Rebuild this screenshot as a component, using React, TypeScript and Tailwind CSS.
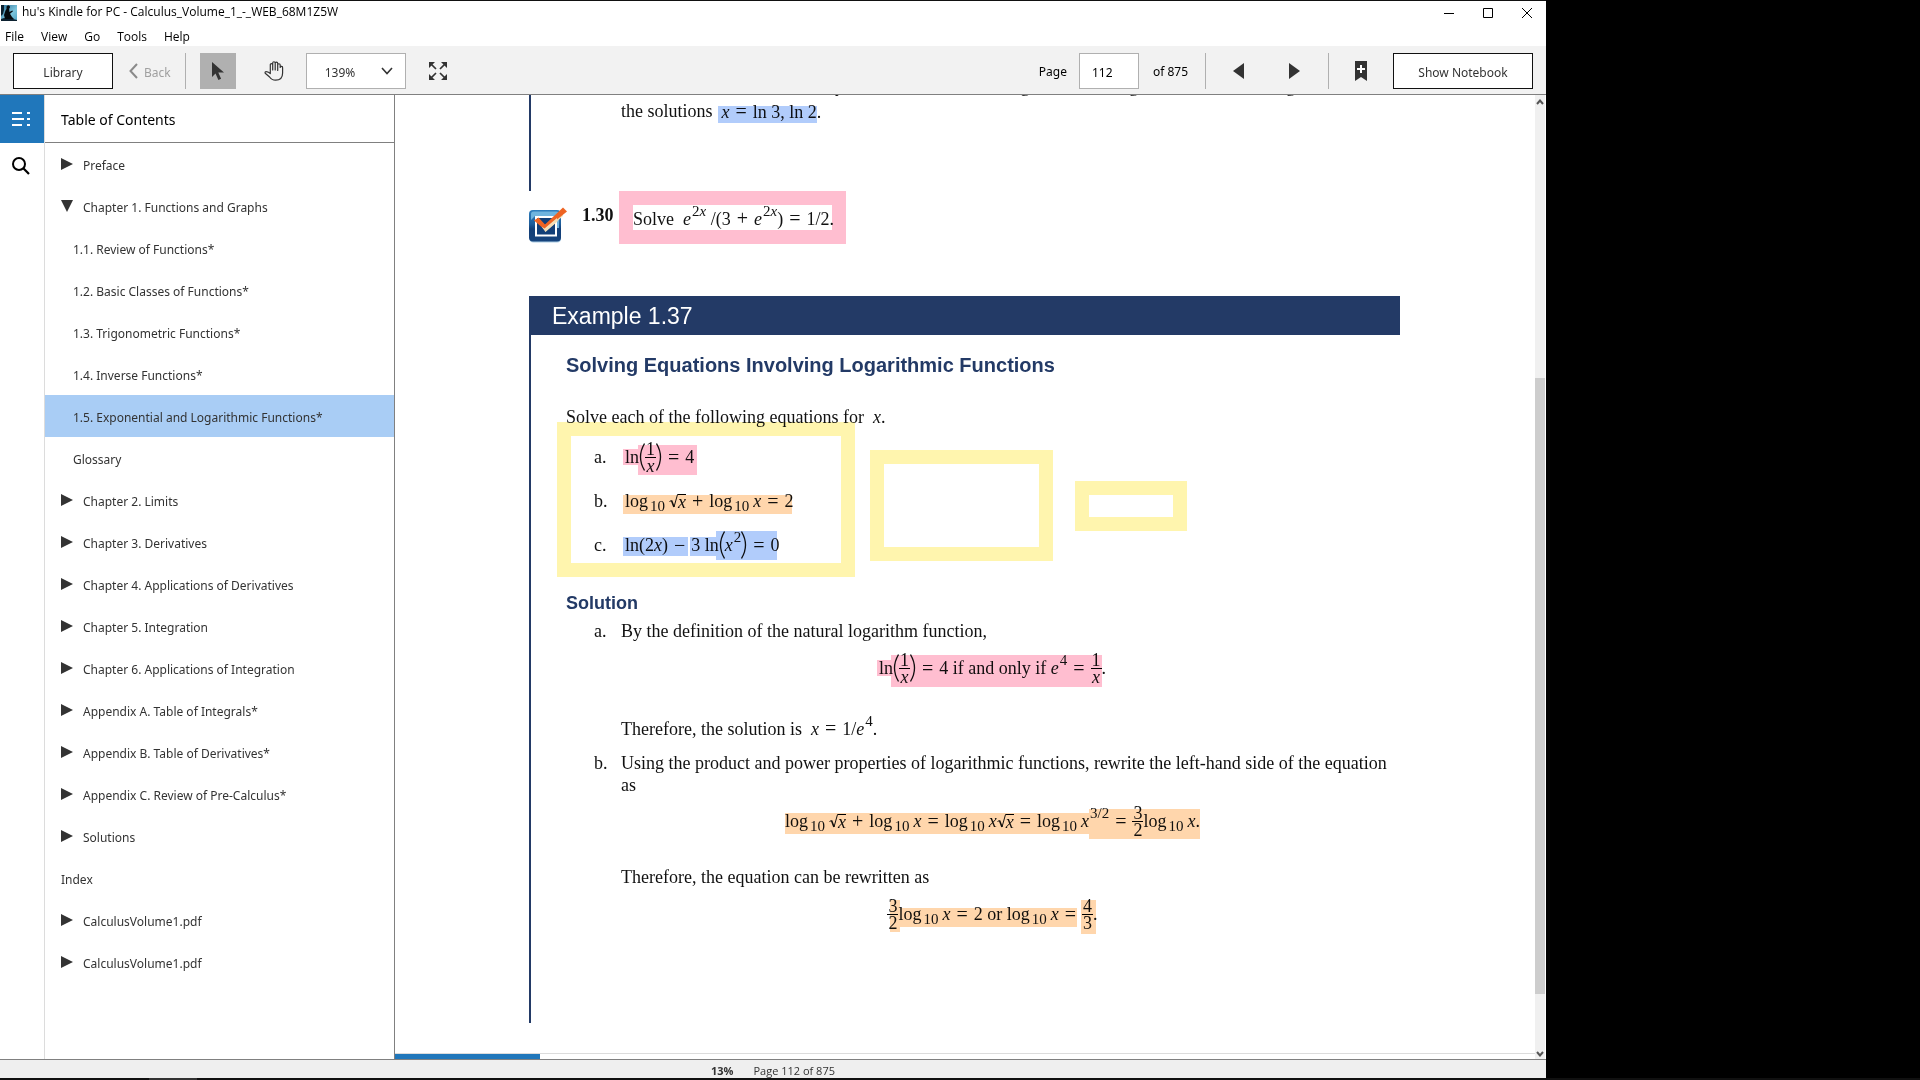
import type { ReactNode } from "react";

type TocEntry = { label: string; kind: "closed" | "open" | "child" | "plain"; active?: boolean };

const toc: TocEntry[] = [
  { label: "Preface", kind: "closed" },
  { label: "Chapter 1. Functions and Graphs", kind: "open" },
  { label: "1.1. Review of Functions*", kind: "child" },
  { label: "1.2. Basic Classes of Functions*", kind: "child" },
  { label: "1.3. Trigonometric Functions*", kind: "child" },
  { label: "1.4. Inverse Functions*", kind: "child" },
  { label: "1.5. Exponential and Logarithmic Functions*", kind: "child", active: true },
  { label: "Glossary", kind: "child" },
  { label: "Chapter 2. Limits", kind: "closed" },
  { label: "Chapter 3. Derivatives", kind: "closed" },
  { label: "Chapter 4. Applications of Derivatives", kind: "closed" },
  { label: "Chapter 5. Integration", kind: "closed" },
  { label: "Chapter 6. Applications of Integration", kind: "closed" },
  { label: "Appendix A. Table of Integrals*", kind: "closed" },
  { label: "Appendix B. Table of Derivatives*", kind: "closed" },
  { label: "Appendix C. Review of Pre-Calculus*", kind: "closed" },
  { label: "Solutions", kind: "closed" },
  { label: "Index", kind: "plain" },
  { label: "CalculusVolume1.pdf", kind: "closed" },
  { label: "CalculusVolume1.pdf", kind: "closed" },
];

/* ---------- icons ---------- */

function AppLogo() {
  return (
    <svg width="16" height="16" viewBox="0 0 16 16" aria-hidden="true">
      <defs>
        <linearGradient id="sky" x1="0" y1="0" x2="1" y2="1">
          <stop offset="0" stopColor="#2b6f96" />
          <stop offset="0.6" stopColor="#7cc4dc" />
          <stop offset="1" stopColor="#4fa3c4" />
        </linearGradient>
      </defs>
      <rect width="16" height="16" fill="url(#sky)" />
      <path d="M0 0h3v5l-1 4-2 2zM0 14l3-1 9 1 4 1v1H0z" fill="#0c2130" />
      <path d="M5.500 1.500a1.800 1.800 0 1 1 2.600 2.200L8.500 7l2.800-1.500.7.8-3 2.400L11 12l2 2H4l-1-4 1.500-4.500 1-1.500z" fill="#050a0e" />
    </svg>
  );
}

function HandIcon() {
  return (
    <svg width="20" height="20" viewBox="0 0 20 20" fill="none" stroke="#333" strokeWidth="1.200" strokeLinecap="round" strokeLinejoin="round" aria-hidden="true">
      <path d="M6.300 12.500V3.800a1.200 1.200 0 0 1 2.400 0V9V2a1.200 1.200 0 0 1 2.500 0V9V2.300a1.200 1.200 0 0 1 2.500 0V9.400V4a1.200 1.200 0 0 1 2.500 0V6.500a1.200 1.200 0 0 1 2.400.3V12c0 4-2.200 7.200-7 7.200-2.900 0-4.600-1-6-3.200L1.200 12.300c-.5-1.100.3-1.900 1.300-1.700 1.600.2 2.600.8 3.800 1.900z" />
    </svg>
  );
}

function CursorIcon() {
  return (
    <svg width="12" height="18" viewBox="0 0 12 18" fill="#333" aria-hidden="true">
      <path d="M0 0v15l3.500-3.500L6.400 18l2.700-1.200L6.300 10.500H12z" />
    </svg>
  );
}

function ExpandIcon() {
  return (
    <svg width="18" height="18" viewBox="0 0 18 18" fill="#333" stroke="#333" strokeWidth="1.700" aria-hidden="true">
      <path d="M0 0h6L0 6zM18 0v6l-6-6zM0 18v-6l6 6zM18 18h-6l6-6z" stroke="none" />
      <path d="M2 2l5 5M16 2l-5 5M2 16l5-5M16 16l-5-5" fill="none" />
    </svg>
  );
}

function Chevron({ dir }: { dir: "left" | "down" }) {
  return dir === "left" ? (
    <svg width="9" height="16" viewBox="0 0 9 16" fill="none" stroke="#8a8a8a" strokeWidth="2" aria-hidden="true">
      <path d="M8 1L1.500 8 8 15" />
    </svg>
  ) : (
    <svg width="12" height="8" viewBox="0 0 12 8" fill="none" stroke="#333" strokeWidth="1.600" aria-hidden="true">
      <path d="M1 1l5 5.500L11 1" />
    </svg>
  );
}

function Triangle({ dir }: { dir: "left" | "right" }) {
  return (
    <svg width="11" height="16" viewBox="0 0 11 16" fill="#333" aria-hidden="true">
      <path d={dir === "left" ? "M11 0v16L0 8z" : "M0 0v16l11-8z"} />
    </svg>
  );
}

function BookmarkIcon() {
  return (
    <svg width="12" height="20" viewBox="0 0 12 20" aria-hidden="true">
      <path d="M0 0h12v20l-6-4-6 4z" fill="#333" />
      <path d="M6 4v8M2 8h8" stroke="#fff" strokeWidth="2" />
    </svg>
  );
}

function SearchIcon() {
  return (
    <svg width="18" height="18" viewBox="0 0 18 18" fill="none" stroke="#000" strokeWidth="2" aria-hidden="true">
      <circle cx="7" cy="7" r="6" />
      <path d="M11.300 11.300L17 17" strokeWidth="2.200" />
    </svg>
  );
}

function TocIcon() {
  return (
    <svg width="18" height="14" viewBox="0 0 18 14" fill="#fff" aria-hidden="true">
      <path d="M0 0h10v2H0zM15 0h3v2h-3zM0 6h12v2H0zM15 6h3v2h-3zM0 12h10v2H0zM15 12h3v2h-3z" />
    </svg>
  );
}

function CheckBadge() {
  return (
    <svg width="38" height="36" viewBox="0 0 38 36" aria-hidden="true">
      <defs>
        <linearGradient id="badge" x1="0" y1="0" x2="0" y2="1">
          <stop offset="0" stopColor="#2f7fbe" />
          <stop offset="0.45" stopColor="#1d5c99" />
          <stop offset="0.6" stopColor="#123f78" />
          <stop offset="1" stopColor="#16437c" />
        </linearGradient>
      </defs>
      <rect x="0.500" y="4" width="31.500" height="31.500" rx="4" fill="#a9cbe4" />
      <rect x="0" y="3" width="32" height="31.500" rx="4" fill="url(#badge)" />
      <path d="M2 13V7q0-2.500 2.500-2.500h23Q30 4.500 30 7v14h-3V9H6z" fill="#6fb4de" />
      <rect x="7" y="10" width="20" height="18.500" fill="#123f78" stroke="#fff" strokeWidth="2" />
      <path d="M16.500 24.500L34 9V4L15 19z" fill="#f3deb6" />
      <path d="M5 13.500l4.500-3 6.500 7L34 .5l4 4L15.500 22.500z" fill="#ee6423" />
      <path d="M15.500 21.500L28 11l.5 3.500-12 10.500-4-5.500z" fill="#f3deb6" />
    </svg>
  );
}

/* ---------- math ---------- */

const V = ({ children }: { children: ReactNode }) => <i className="italic">{children}</i>;
const Op = ({ children }: { children: ReactNode }) => <span className="mx-1.5 text-[20px]">{children}</span>;
const Sup = ({ children }: { children: ReactNode }) => <sup className="top-[-9px] ml-px text-[15px]">{children}</sup>;
const Log = () => (
  <span className="mr-1">
    log<sub className="bottom-[-4px] ml-0.5 text-[15px]">10</sub>
  </span>
);

function Frac({ top, bottom }: { top: ReactNode; bottom: ReactNode }) {
  return (
    <span className="inline-flex flex-col items-center leading-4">
      <span className="px-px">{top}</span>
      <span className="w-full border-t border-black px-px text-center">{bottom}</span>
    </span>
  );
}

function Paren({ side }: { side: "l" | "r" }) {
  return (
    <svg width="6" height="28" viewBox="0 0 6 28" fill="none" stroke="#111" strokeWidth="1.300" aria-hidden="true">
      <path d={side === "l" ? "M5.500 .5Q-2.500 14 5.500 27.500" : "M.5 .5Q8.500 14 .5 27.500"} />
    </svg>
  );
}

function Root() {
  return (
    <span className="inline-flex items-center">
      <svg width="9" height="14" viewBox="0 0 9 14" fill="none" stroke="#111" aria-hidden="true">
        <path d="M.5 7.500L2.500 6.500" />
        <path d="M2.500 6.500L5 13" strokeWidth="1.600" />
        <path d="M5 13L8.500 .5H9" />
      </svg>
      <span className="h-[14px] border-t border-black leading-[14px]">
        <V>x</V>
      </span>
    </span>
  );
}

const Math = ({ children }: { children: ReactNode }) => (
  <span className="flex h-11 items-center whitespace-pre">{children}</span>
);

/* ---------- reader annotations ---------- */

const highlights = [
  "left-[189px] top-[11px] w-[99px] h-[17px] bg-[#b1ccfb]",
  "left-[94px] top-[354px] w-[15px] h-[16px] bg-[#ffbed0]",
  "left-[109px] top-[350px] w-[59px] h-[30px] bg-[#ffbed0]",
  "left-[94px] top-[400px] w-[169px] h-[19px] bg-[#ffd6ac]",
  "left-[94px] top-[442px] w-[65px] h-[19px] bg-[#b1ccfb]",
  "left-[161px] top-[442px] w-[26px] h-[19px] bg-[#b1ccfb]",
  "left-[187px] top-[436px] w-[61px] h-[29px] bg-[#b1ccfb]",
  "left-[348px] top-[565px] w-[14px] h-[16px] bg-[#ffbed0]",
  "left-[362px] top-[560px] w-[211px] h-[32px] bg-[#ffbed0]",
  "left-[256px] top-[718px] w-[304px] h-[21px] bg-[#ffd6ac]",
  "left-[560px] top-[714px] w-[111px] h-[30px] bg-[#ffd6ac]",
  "left-[361px] top-[805px] w-[10px] h-[32px] bg-[#ffd6ac]",
  "left-[371px] top-[813px] w-[177px] h-[19px] bg-[#ffd6ac]",
  "left-[552px] top-[805px] w-[15px] h-[34px] bg-[#ffd6ac]",
  "left-[28px] top-[327px] w-[298px] h-[155px] border-[14px] border-[#fff5ae]",
  "left-[341px] top-[355px] w-[183px] h-[111px] border-[14px] border-[#fff5ae]",
  "left-[546px] top-[386px] w-[112px] h-[50px] border-[14px] border-[#fff5ae]",
];

function BookPage() {
  return (
    <article className="relative mx-auto w-full max-w-[872px] pr-px font-['Liberation_Serif',serif] text-[18px] leading-[22px] text-[#111]">
      {highlights.map((box) => (
        <span key={box} className={`absolute mix-blend-multiply ${box}`} />
      ))}

      <section className="flow-root h-24 border-l-2 border-[#233a66] pl-[90px]">
        <div className="-mt-5">
          <p className="mb-[3px] whitespace-nowrap">
            Therefore, the solutions satisfy <V>e</V><Sup><V>x</V></Sup> = 3 and <V>e</V><Sup><V>x</V></Sup> = 2. Taking the natural logarithm of both sides gives us
          </p>
          <p className="flex whitespace-pre">
            the solutions  <span><V>x</V><Op>=</Op>ln 3, ln 2.</span>
          </p>
        </div>
      </section>

      <section className="mb-[52px] flex items-start">
        <div className="mt-4 w-[53px]"><CheckBadge /></div>
        <b className="mt-[13px] w-[37px]">1.30</b>
        <p className="h-[53px] w-[227px] whitespace-pre border-[14px] border-[#ffbed0] pt-0.5">
          Solve  <V>e</V><Sup>2<V>x</V></Sup> /(3<Op>+</Op><V>e</V><Sup>2<V>x</V></Sup>)<Op>=</Op>1/2.
        </p>
      </section>

      <section>
        <h2 className="bg-[#233a66] pl-[23px] pt-px font-['Liberation_Sans',sans-serif] text-[23px] leading-[38px] text-white">Example 1.37</h2>
        <div className="border-l-2 border-[#233a66] pb-[87px] pl-[35px] pt-[18px]">
          <h3 className="font-['Liberation_Sans',sans-serif] text-[20px] font-bold leading-6 text-[#233a66]">
            Solving Equations Involving Logarithmic Functions
          </h3>
          <p className="mb-[7px] mt-[29px] whitespace-pre">Solve each of the following equations for  <V>x</V>.</p>
          <ol className="pl-7">
            <li className="flex items-center">
              <span className="w-[31px]">a.</span>
              <Math>ln<Paren side="l" /><Frac top="1" bottom={<V>x</V>} /><Paren side="r" /><Op>=</Op>4</Math>
            </li>
            <li className="flex items-center">
              <span className="w-[31px]">b.</span>
              <Math><Log /><Root /><Op>+</Op><Log /><V>x</V><Op>=</Op>2</Math>
            </li>
            <li className="flex items-center">
              <span className="w-[31px]">c.</span>
              <Math>ln(2<V>x</V>)<Op>−</Op>3 ln<Paren side="l" /><span><V>x</V><Sup>2</Sup></span><Paren side="r" /><Op>=</Op>0</Math>
            </li>
          </ol>

          <h4 className="mb-1.5 mt-[25px] font-['Liberation_Sans',sans-serif] text-[18px] font-bold text-[#233a66]">Solution</h4>
          <ol className="pl-7">
            <li className="flex">
              <span className="w-[27px] shrink-0">a.</span>
              <div className="flex-1 pr-2">
                <p>By the definition of the natural logarithm function,</p>
                <div className="mb-[27px] mt-1 flex justify-center pr-7">
                  <Math>ln<Paren side="l" /><Frac top="1" bottom={<V>x</V>} /><Paren side="r" /><Op>=</Op>4 if and only if <span><V>e</V><Sup>4</Sup></span><Op>=</Op><Frac top="1" bottom={<V>x</V>} />.</Math>
                </div>
                <p className="whitespace-pre">Therefore, the solution is  <V>x</V><Op>=</Op>1/<V>e</V><Sup>4</Sup>.</p>
              </div>
            </li>
            <li className="mt-3 flex">
              <span className="w-[27px] shrink-0">b.</span>
              <div className="flex-1 pr-2">
                <p>Using the product and power properties of logarithmic functions, rewrite the left-hand side of the equation as</p>
                <div className="mb-[23px] mt-[3px] flex justify-center pr-7">
                  <Math>
                    <Log /><Root /><Op>+</Op><Log /><V>x</V><Op>=</Op><Log /><V>x</V><Root /><Op>=</Op><Log /><span><V>x</V><Sup>3/2</Sup></span><Op>=</Op><Frac top="3" bottom="2" /><Log /><V>x</V>.
                  </Math>
                </div>
                <p>Therefore, the equation can be rewritten as</p>
                <div className="mt-1 flex justify-center pr-7">
                  <Math><Frac top="3" bottom="2" /><Log /><V>x</V><Op>=</Op>2 or <Log /><V>x</V><Op>=</Op><Frac top="4" bottom="3" />.</Math>
                </div>
              </div>
            </li>
          </ol>
        </div>
      </section>
    </article>
  );
}

/* ---------- window chrome ---------- */

function TitleBar() {
  return (
    <header className="flex h-[25px] shrink-0 items-center border-t border-[#111] pb-px pl-px pr-3.5 font-['Open_Sans',sans-serif]">
      <AppLogo />
      <h1 className="ml-[5px] pb-0.5 text-[12px] leading-4 text-black">hu's Kindle for PC - Calculus_Volume_1_-_WEB_68M1Z5W</h1>
      <div className="ml-auto flex items-center gap-[29px]">
        <button aria-label="Minimize"><svg width="10" height="10" className="block"><path d="M0 5.500h10" stroke="#000" /></svg></button>
        <button aria-label="Maximize"><svg width="10" height="10" className="block"><path d="M.5 .5h9v9h-9z" stroke="#000" fill="none" /></svg></button>
        <button aria-label="Close"><svg width="10" height="10" className="block"><path d="M0 0l10 10M10 0L0 10" stroke="#000" /></svg></button>
      </div>
    </header>
  );
}

function MenuBar() {
  return (
    <nav className="flex h-[21px] shrink-0 items-center gap-[17px] pl-[5px] pt-0.5 font-['Open_Sans',sans-serif] text-[12px] text-black">
      {["File", "View", "Go", "Tools", "Help"].map((m) => (
        <button key={m}>{m}</button>
      ))}
    </nav>
  );
}

function Toolbar() {
  return (
    <div className="flex h-[49px] shrink-0 items-center border-b border-[#808080] bg-[#f2f2f2] px-[13px] pt-0.5 text-[12px] text-[#333]">
      <button className="h-9 w-[100px] border border-[#111] bg-white pt-[3px]">Library</button>
      <button className="ml-4 flex items-center gap-1.5 text-[#a0a0a0]"><Chevron dir="left" /><span className="pt-[3px]">Back</span></button>
      <span className="ml-3.5 h-9 w-px bg-[#b0b0b0]" />
      <button aria-label="Select" className="ml-3.5 flex h-9 w-9 items-center justify-center bg-[#b0b0b0]"><CursorIcon /></button>
      <button aria-label="Pan" className="ml-5 flex h-9 w-9 items-center justify-center"><HandIcon /></button>
      <div className="ml-3.5 grid h-9 w-[100px] items-center border border-[#b0b0b0] bg-white">
        <select aria-label="Zoom" defaultValue="139%" className="col-start-1 row-start-1 h-full appearance-none bg-transparent pl-[18px] pt-[3px]">
          <option>139%</option>
        </select>
        <span className="pointer-events-none col-start-1 row-start-1 mr-3 justify-self-end"><Chevron dir="down" /></span>
      </div>
      <button aria-label="Full screen" className="ml-[23px]"><ExpandIcon /></button>

      <label htmlFor="page" className="ml-auto pt-px text-black">Page</label>
      <input id="page" defaultValue="112" className="ml-3 h-9 w-[60px] border border-[#b0b0b0] bg-white pl-3 pt-[3px] text-black" />
      <span className="ml-3.5 w-[38px] whitespace-nowrap pt-px text-black">of 875</span>
      <span className="ml-3.5 h-9 w-px bg-[#b0b0b0]" />
      <button aria-label="Previous page" className="ml-[27px]"><Triangle dir="left" /></button>
      <button aria-label="Next page" className="ml-[45px]"><Triangle dir="right" /></button>
      <span className="ml-7 h-9 w-px bg-[#b0b0b0]" />
      <button aria-label="Bookmark" className="ml-[26px]"><BookmarkIcon /></button>
      <button className="ml-[26px] h-9 w-[140px] border border-[#111] bg-white pt-[3px]">Show Notebook</button>
    </div>
  );
}

function Sidebar() {
  return (
    <>
      <nav className="flex w-[45px] shrink-0 flex-col border-r border-[#dcdcdc]">
        <button aria-label="Table of contents" className="flex h-12 items-center justify-center bg-[#2077bb] pl-1 pr-1.5"><TocIcon /></button>
        <button aria-label="Search" className="flex h-[46px] items-center justify-center pr-0.5"><SearchIcon /></button>
      </nav>
      <aside className="w-[350px] shrink-0 border-r border-[#808080]">
        <h2 className="h-12 border-b border-[#808080] pl-4 text-[14px] leading-[50px] text-black">Table of Contents</h2>
        <ul className="text-[12px] text-[#333]">
          {toc.map((t, i) => (
            <li key={i} className={t.active ? "bg-[#a9cdf5]" : ""}>
              <button className={`flex h-[42px] w-full items-center text-left ${t.kind === "child" ? "pl-7" : "pl-4"}`}>
                {(t.kind === "closed" || t.kind === "open") && (
                  <svg width="12" height="12" viewBox="0 0 12 12" fill="#333" className="mr-2.5" aria-hidden="true">
                    <path d={t.kind === "open" ? "M0 0h12L6 12z" : "M0 0v12l12-6z"} />
                  </svg>
                )}
                <span className="pt-[3px]">{t.label}</span>
              </button>
            </li>
          ))}
        </ul>
      </aside>
    </>
  );
}

function Scrollbar() {
  return (
    <div className="flex w-2.5 shrink-0 flex-col items-center bg-[#f0f0f0] pb-0.5 pt-1">
      <svg width="8" height="6" fill="none" stroke="#555" strokeWidth="2"><path d="M1 5l3-3.500L7 5" /></svg>
      <div className="flex w-full flex-1 flex-col">
        <div className="flex-[273]" />
        <div className="flex-[615] bg-[#cdcdcd]" />
        <div className="flex-[57]" />
      </div>
      <svg width="8" height="6" fill="none" stroke="#555" strokeWidth="2"><path d="M1 1l3 3.500L7 1" /></svg>
    </div>
  );
}

export default function App() {
  return (
    <div className="flex h-screen flex-col bg-black font-['Noto_Sans',sans-serif]">
      <div className="mr-[374px] flex min-h-0 flex-1 flex-col bg-white">
        <TitleBar />
        <MenuBar />
        <Toolbar />
        <div className="flex min-h-0 flex-1">
          <Sidebar />
          <main className="flex min-w-0 flex-1 flex-col">
            <div className="min-h-0 flex-1 overflow-hidden"><BookPage /></div>
            <div className="h-1.5 shrink-0 border-t border-[#dcdcdc]">
              <div className="h-full w-[12.7%] bg-[#2077bb]" />
            </div>
          </main>
          <Scrollbar />
          <div className="w-px bg-white" />
        </div>
        <footer className="flex h-[19px] shrink-0 items-center justify-center gap-5 border-t border-[#808080] bg-[#efefef] pt-1 font-['Open_Sans',sans-serif] text-[11px] text-[#333]">
          <b>13%</b>
          <span>Page 112 of 875</span>
        </footer>
      </div>
      <div className="h-0.5 shrink-0 bg-[#101010] pl-[149px]"><div className="h-full w-12 bg-[#333]" /></div>
    </div>
  );
}
